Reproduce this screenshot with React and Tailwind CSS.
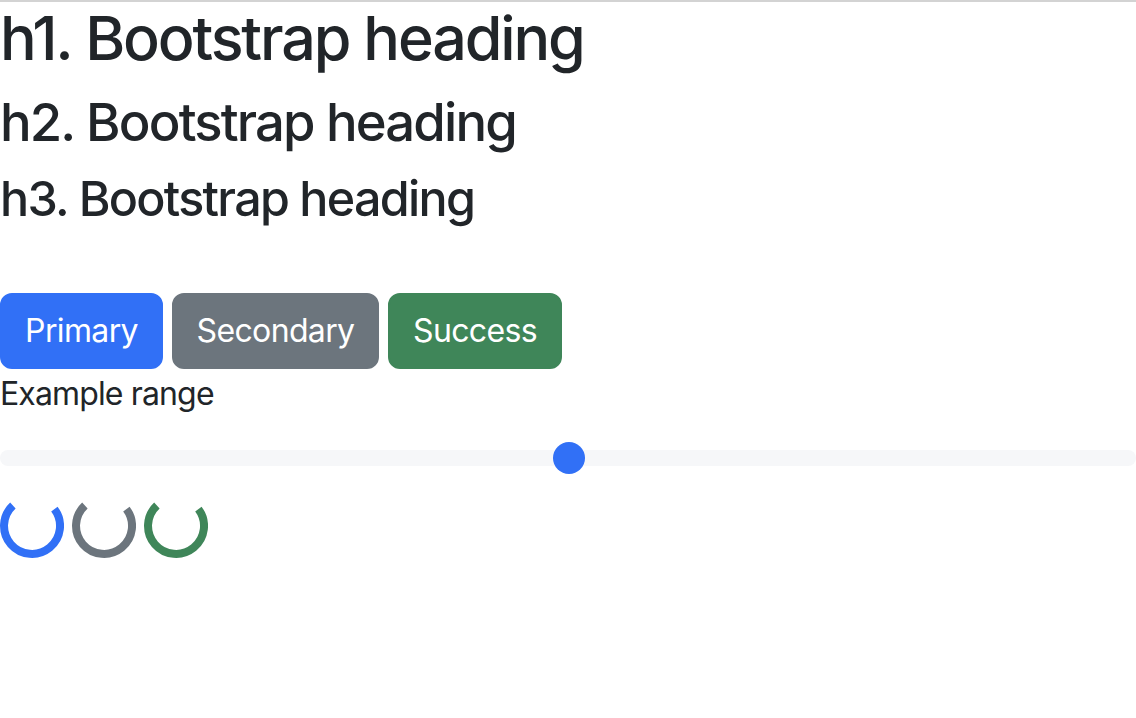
const buttons = [
    { label: 'Primary', color: 'bg-[#3170f6] border-[#3170f6]', width: 'w-[163px]' },
    { label: 'Secondary', color: 'bg-[#6c757d] border-[#6c757d]', width: 'w-[207px]' },
    { label: 'Success', color: 'bg-[#3f8659] border-[#3f8659]', width: 'w-[174px]' },
];

const spinners = ['#3170f6', '#6c757d', '#3f8659'];

export default function App() {
    return (
        <div className="min-h-screen border-t-2 border-[#d3d3d3] bg-white text-[#212529]" style={{ fontFamily: 'Inter, "Noto Sans", sans-serif' }}>
            <h1 className="mb-4 text-[61px] font-medium leading-[73px] tracking-[-0.035em]">h1. Bootstrap heading</h1>
            <h2 className="mb-4 text-[52.6px] font-medium leading-[63px] tracking-[-0.035em]">h2. Bootstrap heading</h2>
            <h3 className="mb-[65px] text-[48.4px] font-medium leading-[58px] tracking-[-0.035em]">h3. Bootstrap heading</h3>

            <div className="flex gap-[9px]">
                {buttons.map((b) => (
                    <button key={b.label} className={`${b.color} ${b.width} rounded-[12px] border-2 py-3 text-center text-[32px] leading-[48px] tracking-[-0.02em] text-white`}>
                        {b.label}
                    </button>
                ))}
            </div>

            <label className="mt-px mb-4 block text-[32px] leading-[48px] tracking-[-0.027em]">Example range</label>
            <div className="relative flex h-12 items-center">
                <div className="h-4 w-full rounded-full bg-[#f6f7f9]" />
                <div className="absolute top-2 left-[calc(50%-15px)] h-8 w-8 rounded-full bg-[#3170f6]" />
            </div>

            <div className="mt-3 flex gap-2">
                {spinners.map((c) => (
                    <Spinner key={c} color={c} />
                ))}
            </div>
        </div>
    );
}

function Spinner({ color }) {
    return (
        <svg width="64" height="64" viewBox="0 0 64 64" role="status">
            <path d="M12.9 11.5 A28 28 0 1 0 54.4 15.1" fill="none" stroke={color} strokeWidth="8" />
        </svg>
    );
}
